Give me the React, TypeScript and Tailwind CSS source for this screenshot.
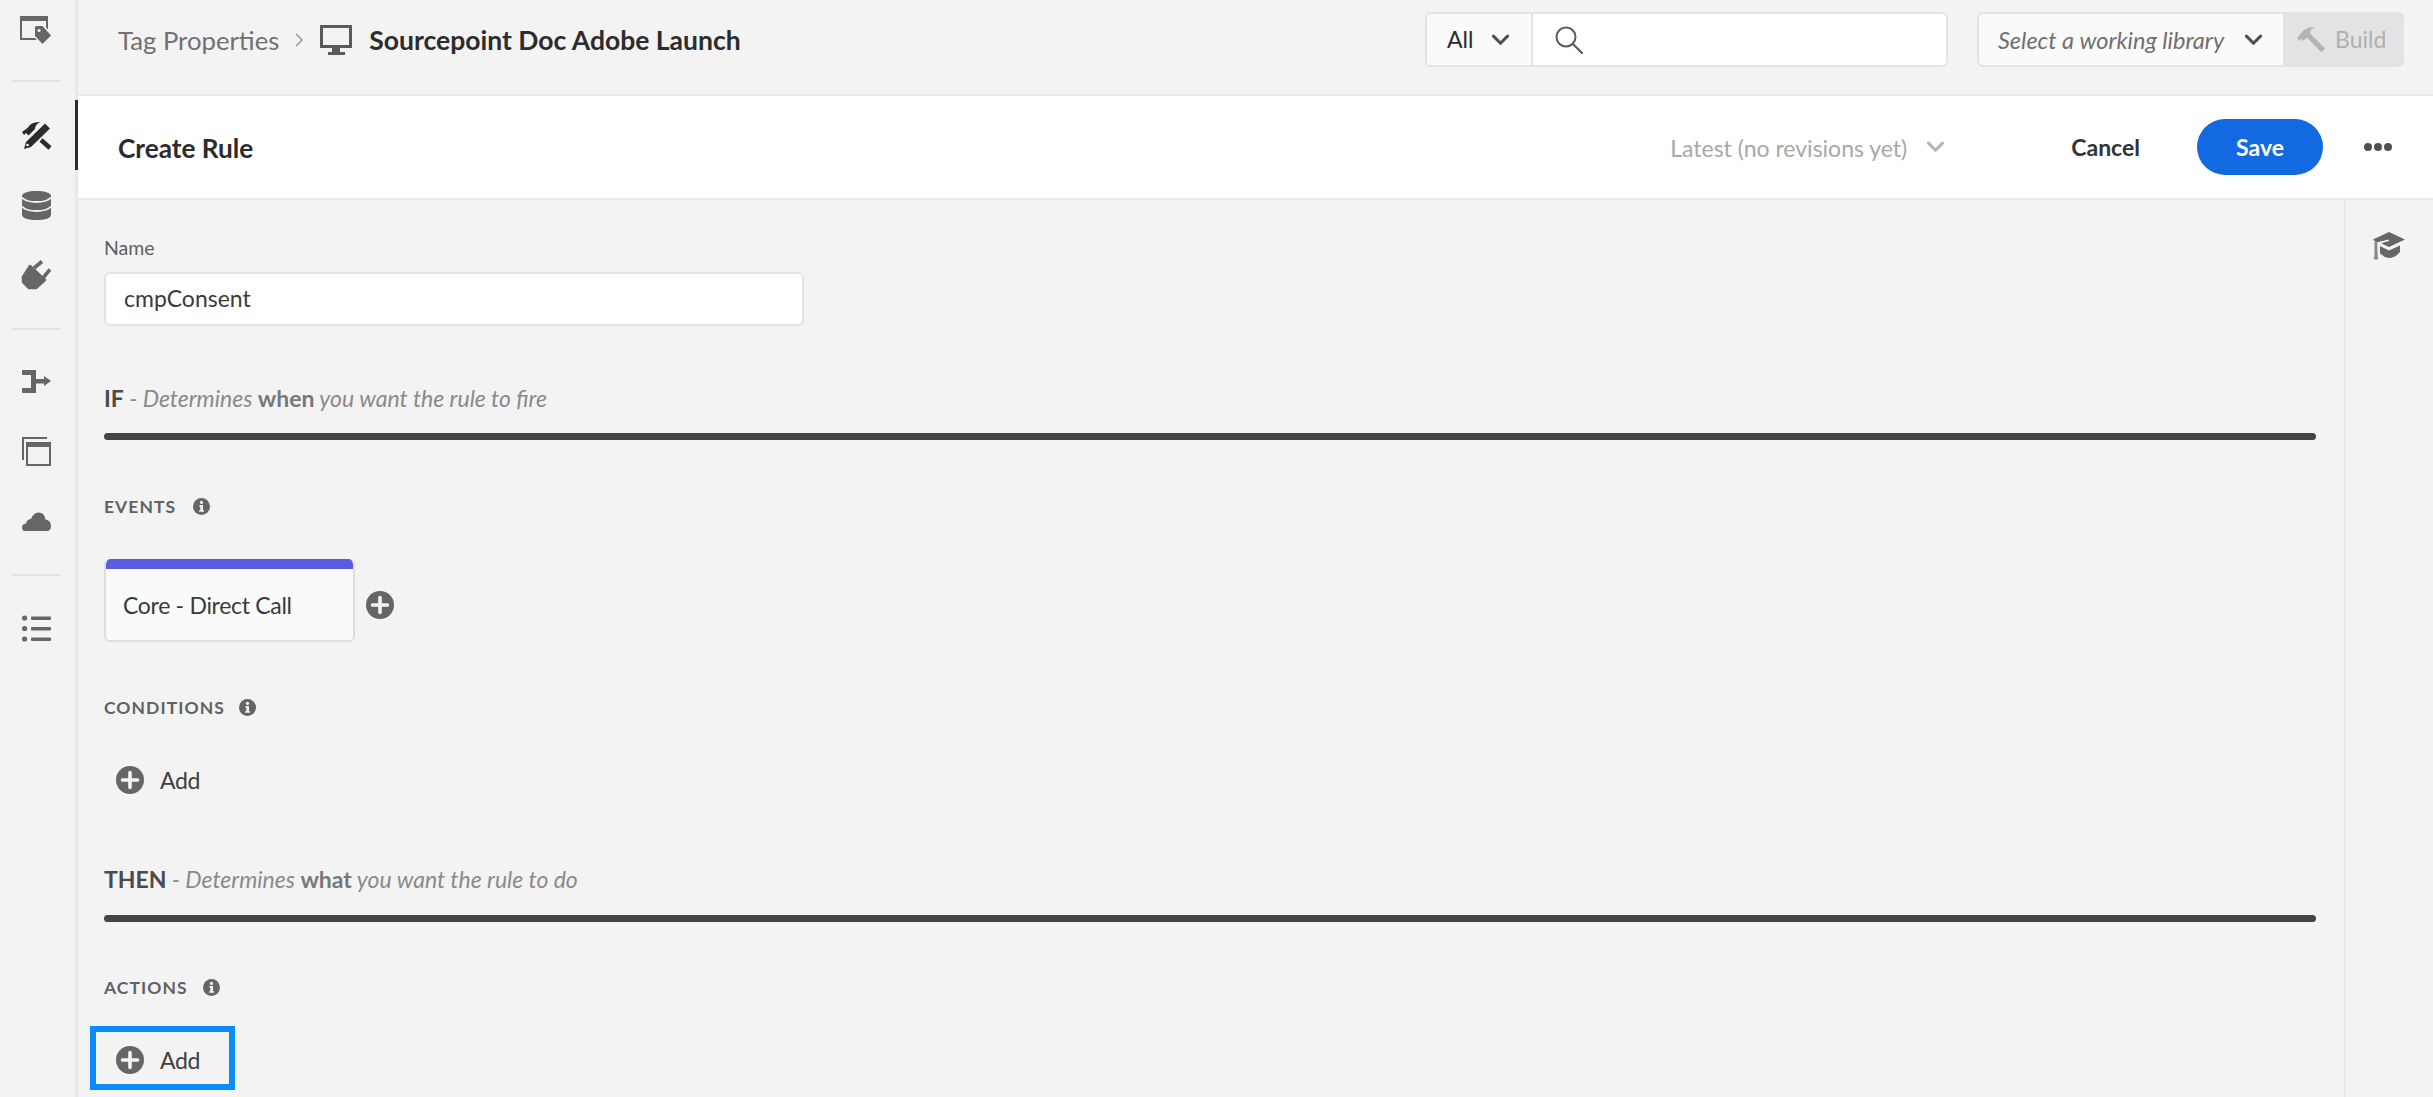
import React from "react";

const G = "#666666";

function WindowTag() {
  return (
    <svg width="32" height="29" viewBox="0 0 32 29">
      <path d="M0 0H28V24H0Z M2 5V22H26V5Z" fill={G} fillRule="evenodd" />
      <path d="M14.5 9.5 H23 L32 19.5 L23 29 L14.5 20 Z" fill="#f3f3f3" stroke="#f3f3f3" strokeWidth="2" />
      <path d="M15 11.5Q15 10 16.5 10H22.5L31 19.5L22.5 28L15 20Z" fill={G} />
      <circle cx="19" cy="14.5" r="1.6" fill="#f3f3f3" />
    </svg>
  );
}
function Tools() {
  return (
    <svg width="30" height="29" viewBox="0 0 30 29">
      <path d="M1 11L6.5 7Q10 0.5 19 1Q14 4 14 8L7.5 14.5L5 12L3 14Z" fill="#2c2c2c" />
      <path d="M20 19L29 27" stroke="#2c2c2c" strokeWidth="4.6" />
      <path d="M3 28L5 21L24 2.5L29 7.5L10 26Z" fill="#2c2c2c" />
      <circle cx="6.5" cy="24" r="1.3" fill="#f3f3f3" />
    </svg>
  );
}
function Database() {
  return (
    <svg width="29" height="29" viewBox="0 0 29 29">
      <path d="M0 5C0 2 6 0 14.5 0S29 2 29 5V24C29 27 23 29 14.5 29S0 27 0 24Z" fill={G} />
      <path d="M0 6.5C3 10 9 11 14.5 11S26 10 29 6.5" stroke="#f3f3f3" strokeWidth="1.8" fill="none" />
      <path d="M0 15.5C3 19 9 20 14.5 20S26 19 29 15.5" stroke="#f3f3f3" strokeWidth="1.8" fill="none" />
    </svg>
  );
}
function Plug() {
  return (
    <svg width="30" height="30" viewBox="0 0 30 30">
      <path d="M13 8L21 1.5" stroke={G} strokeWidth="3.6" />
      <path d="M22 18L29 9.5" stroke={G} strokeWidth="3.6" />
      <path d="M2 17L9 6L24 20L15 28L8 28L2 22Z" fill={G} stroke={G} strokeWidth="2.5" strokeLinejoin="round" />
    </svg>
  );
}
function RuleArrow() {
  return (
    <svg width="29" height="23" viewBox="0 0 29 23">
      <path d="M1 0H14V9H22V6L29 11L22 16V13.5H14V23H1Q0 23 0 22V19Q0 18 1 18H9V5H1Q0 5 0 4V1Q0 0 1 0Z" fill={G} />
    </svg>
  );
}
function Layers() {
  return (
    <svg width="29" height="29" viewBox="0 0 29 29">
      <path d="M0 0H25V2H2V23H0Z" fill={G} />
      <path d="M4 5H29V29H4Z M6 10V27H27V10Z" fill={G} fillRule="evenodd" />
    </svg>
  );
}
function Cloud() {
  return (
    <svg width="29" height="19" viewBox="0 0 29 19">
      <path d="M3.5 19Q0 19 0 15.5Q0 12 4 11.5Q5 7 9 7Q11 1 16.5 0.5Q22.5 0.5 23.5 7.5Q29 8.5 29 14Q29 19 24.5 19Z" fill={G} />
    </svg>
  );
}
function ListIcon() {
  return (
    <svg width="29" height="27" viewBox="0 0 29 27">
      <circle cx="2.6" cy="3" r="2.6" fill={G} />
      <circle cx="2.6" cy="13.5" r="2.6" fill={G} />
      <circle cx="2.6" cy="24" r="2.6" fill={G} />
      <rect x="9" y="1.5" width="20" height="3.4" rx="1" fill={G} />
      <rect x="9" y="12" width="20" height="3.4" rx="1" fill={G} />
      <rect x="9" y="22.5" width="20" height="3.4" rx="1" fill={G} />
    </svg>
  );
}
function Monitor() {
  return (
    <svg width="33" height="30" viewBox="0 0 33 30">
      <path d="M0 0H32V23H0Z M3 3V20H29V3Z" fill="#5a5a5a" fillRule="evenodd" />
      <path d="M12 23H20V27H25V30H8V27H12Z" fill="#5a5a5a" />
    </svg>
  );
}
function Chevron({ color = "#505050", w = 19, h = 12 }: { color?: string; w?: number; h?: number }) {
  return (
    <svg width={w} height={h} viewBox="0 0 17 11">
      <path d="M2 2L8.5 8.5L15 2" fill="none" stroke={color} strokeWidth="2.8" strokeLinecap="round" strokeLinejoin="round" />
    </svg>
  );
}
function Search() {
  return (
    <svg width="28" height="28" viewBox="0 0 28 28">
      <circle cx="11" cy="11" r="9.5" fill="none" stroke="#5a5a5a" strokeWidth="2" />
      <path d="M18 18L27 27" stroke="#5a5a5a" strokeWidth="2.2" strokeLinecap="round" />
    </svg>
  );
}
function Hammer() {
  return (
    <svg width="30" height="27" viewBox="0 0 30 27">
      <path d="M1 12L7 5Q12 0 19 1.5Q14 3 14 7.5L29 22.5L25.5 26.5L11 11.5L7 15L5 12.5L3 15Z" fill="#b3b3b3" />
    </svg>
  );
}
function Cap() {
  return (
    <svg width="32" height="28" viewBox="0 0 32 28">
      <path d="M16 0L32 7.5L16 15L8 11.2L16 9L15.5 7.5L3.5 10.5L0 7.5Z" fill="#666666" />
      <path d="M1.5 9.5H4.2L4.6 23L5 27.5H1L1.4 23Z" fill="#8a8a8a" />
      <path d="M7 14L16 18.5L27 13.5V20Q22 26 16 26Q10 25 7 21Z" fill="#666666" />
    </svg>
  );
}
function Info({ className = "" }: { className?: string }) {
  return (
    <svg className={className} width="17" height="17" viewBox="0 0 17 17">
      <circle cx="8.5" cy="8.5" r="8.5" fill={G} />
      <circle cx="8.5" cy="4.4" r="1.6" fill="#f3f3f3" />
      <path d="M6.4 7H10V12.3H11V13.8H6.2V12.3H7.3V8.4H6.4Z" fill="#f3f3f3" />
    </svg>
  );
}
function PlusCircle() {
  return (
    <svg width="28" height="28" viewBox="0 0 28 28">
      <circle cx="14" cy="14" r="14" fill={G} />
      <path d="M14 6.5V21.5M6.5 14H21.5" stroke="#f3f3f3" strokeWidth="3.6" strokeLinecap="round" />
    </svg>
  );
}

function RailItem({ h = "h-[70px]", active = false, children }: { h?: string; active?: boolean; children: React.ReactNode }) {
  return (
    <div className={`${h} w-[78px] flex items-center justify-center ${active ? "border-r-[3px] border-[#2c2c2c]" : "pr-[3px]"}`}>
      <div className="w-[72px] flex justify-center -ml-[3px]">{children}</div>
    </div>
  );
}
function RailDivider({ className = "" }: { className?: string }) {
  return <div className={`ml-[12px] w-[49px] h-[2px] bg-[#e1e1e1] ${className}`} />;
}

function SectionHead({ lead, pre, bold, post, className = "" }: { lead: string; pre: string; bold: string; post: string; className?: string }) {
  return (
    <div className={`h-[30px] leading-[30px] text-[23px] text-[#8a8a8a] whitespace-nowrap ${className}`}>
      <span className="font-bold text-[#4b4b4b]">{lead}</span>
      <span className="italic">{" - "}{pre}{" "}</span>
      <span className="font-bold text-[#787878]">{bold}</span>
      <span className="italic">{" "}{post}</span>
    </div>
  );
}
function HeavyRule({ className = "" }: { className?: string }) {
  return <div className={`h-[7px] rounded-full bg-[#444444] ${className}`} />;
}
function FieldLabel({ text, gap, className = "" }: { text: string; gap: string; className?: string }) {
  return (
    <div className={`flex items-center h-[20px] ${className}`}>
      <span className="text-[17.5px] font-bold tracking-[1.05px] text-[#626262] leading-[20px]">{text}</span>
      <Info className={`${gap} -mt-[2px]`} />
    </div>
  );
}
function AddRow() {
  return (
    <div className="flex items-center gap-[16px] h-[28px]">
      <PlusCircle />
      <span className="text-[23px] tracking-[-0.3px] text-[#3f3f3f]">Add</span>
    </div>
  );
}

export default function App() {
  return (
    <div className="flex h-[1097px] w-[2433px] overflow-hidden bg-[#f3f3f3] font-[family-name:Lato,sans-serif] text-[#2c2c2c]">
      <aside className="w-[78px] shrink-0 border-r-[3px] border-[#e8e8e8]">
        <RailItem h="h-[60px]"><WindowTag /></RailItem>
        <RailDivider className="mt-[20px]" />
        <div className="h-[18px]" />
        <RailItem active><Tools /></RailItem>
        <RailItem><Database /></RailItem>
        <RailItem><Plug /></RailItem>
        <div className="h-[18px]" />
        <RailDivider />
        <div className="h-[16px]" />
        <RailItem><RuleArrow /></RailItem>
        <RailItem><Layers /></RailItem>
        <RailItem><Cloud /></RailItem>
        <div className="h-[18px]" />
        <RailDivider />
        <div className="h-[17px]" />
        <RailItem><ListIcon /></RailItem>
      </aside>

      <div className="flex-1 min-w-0 flex flex-col">
        <header className="h-[94px] shrink-0 flex items-center pl-[40px] pr-[29px] pb-[15px]">
          <span className="text-[25.7px] text-[#707070] mt-[2px]">Tag Properties</span>
          <svg className="ml-[15px] mr-[16px]" width="10" height="16" viewBox="0 0 10 16">
            <path d="M2 2L8 8L2 14" fill="none" stroke="#9a9a9a" strokeWidth="1.6" />
          </svg>
          <Monitor />
          <span className="ml-[16px] text-[26.5px] font-bold text-[#2c2c2c] mt-[2px]">Sourcepoint Doc Adobe Launch</span>
          <div className="ml-auto flex h-[55px] w-[523px] rounded-[6px] border-2 border-[#e3e3e3] bg-white overflow-hidden">
            <div className="w-[106px] shrink-0 bg-[#fafafa] border-r-2 border-[#e3e3e3] flex items-center pl-[20px] gap-[18px]">
              <span className="text-[23px] text-[#2c2c2c]">All</span>
              <Chevron />
            </div>
            <div className="flex-1 flex items-center pl-[22px]"><Search /></div>
          </div>
          <div className="ml-[29px] flex h-[55px] w-[427px] rounded-[6px] overflow-hidden">
            <div className="w-[306px] shrink-0 bg-[#fafafa] border-2 border-r-0 border-[#e3e3e3] rounded-l-[6px] flex items-center pl-[19px]">
              <span className="text-[23.5px] italic text-[#6f6f6f] whitespace-nowrap mt-[2px]">Select a working library</span>
              <span className="ml-[20px]"><Chevron /></span>
            </div>
            <div className="flex-1 bg-[#e3e3e3] flex items-center pl-[13px] gap-[9px]">
              <Hammer />
              <span className="text-[23px] text-[#b0b0b0]">Build</span>
            </div>
          </div>
        </header>

        <div className="h-[106px] shrink-0 bg-white border-y-2 border-[#e8e8e8] flex items-center pl-[40px] pr-[41px]">
          <span className="text-[26.2px] font-bold text-[#2c2c2c] mt-[3px]">Create Rule</span>
          <span className="ml-auto text-[23px] text-[#a8a8a8] mt-[2px]">Latest (no revisions yet)</span>
          <span className="ml-[19px]"><Chevron color="#b5b5b5" /></span>
          <span className="ml-[126px] text-[23px] font-bold text-[#333333]">Cancel</span>
          <div className="ml-[57px] w-[126px] h-[56px] rounded-full bg-[#1269e2] flex items-center justify-center text-[23px] font-bold text-white">Save</div>
          <div className="ml-[41px] flex gap-[2px]">
            <span className="w-[8px] h-[8px] rounded-full bg-[#505050]" />
            <span className="w-[8px] h-[8px] rounded-full bg-[#505050]" />
            <span className="w-[8px] h-[8px] rounded-full bg-[#505050]" />
          </div>
        </div>

        <div className="flex-1 min-h-0 flex">
          <main className="flex-1 min-w-0 pl-[26px] pr-[28px] pt-[38px]">
            <div className="h-[20px] leading-[20px] text-[19.5px] text-[#5f5f5f]">Name</div>
            <div className="mt-[14px] w-[700px] h-[54px] rounded-[6px] border-2 border-[#e3e3e3] bg-white flex items-center pl-[18px] pb-[2px] text-[23px] text-[#3a3a3a]">cmpConsent</div>

            <SectionHead className="mt-[57px]" lead="IF" pre="Determines" bold="when" post="you want the rule to fire" />
            <HeavyRule className="mt-[20px]" />

            <FieldLabel className="mt-[57px]" text="EVENTS" gap="ml-[17px]" />
            <div className="mt-[42px] flex items-center">
              <div className="w-[251px] h-[83px] rounded-[6px] border-2 border-t-0 border-[#dedede] bg-[#fafafa] overflow-hidden">
                <div className="h-[10px] -mx-[2px] bg-[#5c5ce0]" />
                <div className="h-[71px] flex items-center pl-[17px] pt-[2px] text-[23px] tracking-[-0.3px] text-[#3a3a3a]">Core - Direct Call</div>
              </div>
              <span className="ml-[11px] mt-[8px]"><PlusCircle /></span>
            </div>

            <FieldLabel className="mt-[56px]" text="CONDITIONS" gap="ml-[14px]" />
            <div className="mt-[48px] pl-[12px]"><AddRow /></div>

            <SectionHead className="mt-[70px]" lead="THEN" pre="Determines" bold="what" post="you want the rule to do" />
            <HeavyRule className="mt-[21px]" />

            <FieldLabel className="mt-[56px]" text="ACTIONS" gap="ml-[15px]" />
            <div className="mt-[28px] -ml-[14px] w-[145px] h-[64px] border-[6px] border-[#0a8cff] flex items-center pl-[20px] pt-[4px]">
              <AddRow />
            </div>
          </main>
          <div className="w-[89px] shrink-0 border-l-2 border-[#e8e8e8] pt-[32px] pl-[27px]">
            <Cap />
          </div>
        </div>
      </div>
    </div>
  );
}
